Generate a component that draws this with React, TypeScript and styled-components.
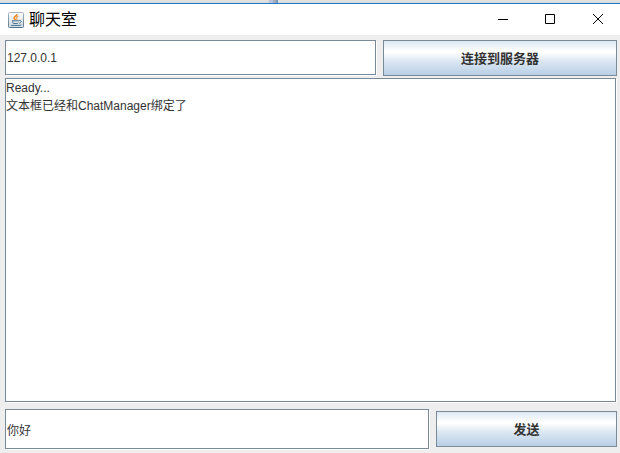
import React, { useState } from "react";
import styled, { createGlobalStyle } from "styled-components";

const steel = "#7a8a99";
const panel = "#eeeeee";
const ink = "#333333";

const GlobalStyle = createGlobalStyle`
  * { box-sizing: border-box; }
  html, body { margin: 0; padding: 0; }
  body {
    background: ${panel};
    font-family: "Liberation Sans", "Noto Sans CJK SC", sans-serif;
    color: ${ink};
  }
`;

const Page = styled.div`
  display: flex;
  flex-direction: column;
  height: 100vh;
  overflow: hidden;
`;

const Backdrop = styled.div`
  display: flex;
  flex: none;
  height: 3px;
  padding-left: 43%;
  background: linear-gradient(#e4e4e4, #d9d9d9);
`;

const BackdropMark = styled.span<{ $width: number; $tone: string }>`
  width: ${(p) => p.$width}px;
  background: ${(p) => p.$tone};
`;

const Frame = styled.main`
  display: flex;
  flex-direction: column;
  flex: 1;
  min-height: 0;
  border-top: 1px solid #1979ca;
  background: ${panel};
`;

const TitleBar = styled.header`
  display: flex;
  align-items: center;
  flex: none;
  height: 31px;
  padding-left: 8px;
  background: #ffffff;
`;

const Title = styled.h1`
  flex: 1;
  margin: 0 0 0 5px;
  font-size: 16px;
  line-height: 20px;
  font-weight: 400;
  color: #000000;
`;

const CaptionButton = styled.button`
  display: flex;
  align-items: center;
  justify-content: center;
  width: 47px;
  height: 31px;
  padding: 0 0 0 2px;
  border: 0;
  background: transparent;
`;

const Content = styled.div`
  display: flex;
  flex-direction: column;
  flex: 1;
  min-height: 0;
  padding: 5px 3px 4px 5px;
`;

const Row = styled.form<{ $columns: string; $height: number }>`
  display: grid;
  grid-template-columns: ${(p) => p.$columns};
  grid-template-rows: 100%;
  align-items: center;
  flex: none;
  gap: 7px;
  height: ${(p) => p.$height}px;
`;

const TextField = styled.input`
  width: 100%;
  min-width: 0;
  height: 100%;
  padding: 0 1px;
  border: 1px solid ${steel};
  border-radius: 0;
  outline: 0;
  background: #ffffff;
  box-shadow: 1px 1px 0 #ffffff;
  font-family: inherit;
  font-size: 12px;
  color: ${ink};
`;

const MetalButton = styled.button`
  align-self: safe center;
  height: 36px;
  padding: 0 0 2px;
  border: 1px solid ${steel};
  border-radius: 0;
  background: linear-gradient(#dde8f3 0%, #ffffff 30%, #ffffff 34%, #dde8f3 58%, #b8cfe5 100%);
  font-family: inherit;
  font-size: 13px;
  font-weight: 700;
  color: ${ink};
`;

const Log = styled.textarea`
  flex: 1;
  min-height: 0;
  margin: 3px 1px 7px 0;
  padding: 0;
  border: 1px solid ${steel};
  border-radius: 0;
  outline: 0;
  resize: none;
  background: #ffffff;
  box-shadow: 1px 1px 0 #ffffff;
  font-family: inherit;
  font-size: 12px;
  line-height: 18px;
  color: ${ink};
`;

function JavaIcon() {
  return (
    <svg width="16" height="16" viewBox="0 0 16 16" aria-hidden="true">
      <defs>
        <linearGradient id="tile" x1="0" y1="0" x2="0" y2="1">
          <stop offset="0" stopColor="#fbfcfd" />
          <stop offset="1" stopColor="#cfd9e2" />
        </linearGradient>
        <linearGradient id="edge" x1="0" y1="0" x2="0" y2="1">
          <stop offset="0" stopColor="#a9b8c4" />
          <stop offset="1" stopColor="#54768f" />
        </linearGradient>
      </defs>
      <rect x="0.5" y="0.5" width="15" height="15" rx="1" fill="url(#tile)" stroke="url(#edge)" />
      <path d="M9 2c.4 1.800-3.200 2.400-3 4.200.1.800 1.200 1 1.400 1.800" fill="none" stroke="#e9821e" strokeWidth="1.500" />
      <path d="M10.500 4.200c-2.200.7-2.400 1.500-1.700 2.200.4.500.1 1.100-.4 1.500" fill="none" stroke="#f0a04b" strokeWidth="1.300" />
      <path d="M4 8.800h7M4.800 9v1.800q.2.700 1 .7h3.400q.8 0 1.100-.7M11 8.600c3.100-.8 2.900 2 .2 2.600M3 13.400h9l1.200-.7" fill="none" stroke="#4d7793" strokeWidth="1" />
    </svg>
  );
}

function CaptionGlyph({ d }: { d: string }) {
  return (
    <svg width="12" height="12" viewBox="0 0 12 12" aria-hidden="true">
      <path d={d} fill="none" stroke="#000000" strokeWidth="1" />
    </svg>
  );
}

const captions = [
  { label: "最小化", d: "M0 5.500H10" },
  { label: "最大化", d: "M0.500 0.500H9.500V9.500H0.500Z" },
  { label: "关闭", d: "M1 0L11 10M11 0L1 10" },
];

export default function App() {
  const [host, setHost] = useState("127.0.0.1");
  const [message, setMessage] = useState("你好");
  const stop = (e: React.FormEvent) => e.preventDefault();

  return (
    <>
      <GlobalStyle />
      <Page>
        <Backdrop>
          <BackdropMark $width={2} $tone="#d9d9d9" />
          <BackdropMark $width={4} $tone="#bcc2d6" />
          <BackdropMark $width={3} $tone="#a3adbd" />
          <BackdropMark $width={2} $tone="#7896bd" />
        </Backdrop>
        <Frame>
          <TitleBar>
            <JavaIcon />
            <Title>聊天室</Title>
            {captions.map((c) => (
              <CaptionButton key={c.label} type="button" aria-label={c.label}>
                <CaptionGlyph d={c.d} />
              </CaptionButton>
            ))}
          </TitleBar>
          <Content>
            <Row $columns="371fr 234fr" $height={35} onSubmit={stop}>
              <TextField
                aria-label="服务器地址"
                value={host}
                onChange={(e) => setHost(e.target.value)}
              />
              <MetalButton type="submit">连接到服务器</MetalButton>
            </Row>
            <Log
              aria-label="聊天记录"
              readOnly
              value={"Ready...\n文本框已经和ChatManager绑定了"}
            />
            <Row $columns="424fr 181fr" $height={40} onSubmit={stop}>
              <TextField
                aria-label="消息"
                value={message}
                onChange={(e) => setMessage(e.target.value)}
              />
              <MetalButton type="submit">发送</MetalButton>
            </Row>
          </Content>
        </Frame>
      </Page>
    </>
  );
}
